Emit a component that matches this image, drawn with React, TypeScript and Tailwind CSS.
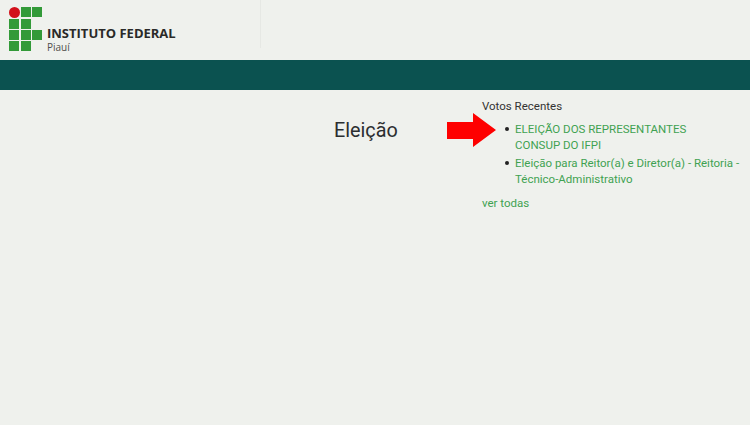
import React from "react";

function Logo() {
  const squares = [
    [21, 7], [32, 7],
    [9, 19], [21, 19],
    [9, 30], [21, 30], [32, 30],
    [9, 41], [21, 41],
  ];
  return (
    <svg width="44" height="54" viewBox="0 0 44 54" className="block">
      <circle cx="14.5" cy="12.5" r="5.5" fill="#d2111b" />
      {squares.map(([x, y]) => (
        <rect key={`${x}-${y}`} x={x} y={y} width="10" height="10" fill="#329a38" />
      ))}
    </svg>
  );
}

export default function App() {
  return (
    <div className="relative min-h-[425px] w-[750px] overflow-hidden bg-[#eff1ed] font-['Roboto',sans-serif]">
      <header className="flex h-[60px] items-start">
        <div className="flex h-[48px] w-[261px] border-r border-[#e6e8e4]">
          <Logo />
          <div className="ml-[3px] mt-[26px] flex flex-col gap-[2px] font-['Open_Sans',sans-serif] text-[#2a2a28]">
            <div className="text-[13px] font-bold leading-[14px]">INSTITUTO FEDERAL</div>
            <div className="text-[10px] leading-[11px] text-[#4f4f4b]">Piauí</div>
          </div>
        </div>
      </header>
      <div className="h-[30px] bg-[#0b5250]" />
      <main className="flex">
        <div className="w-[482px] shrink-0 pt-[29px] pl-[334px]">
          <h1 className="text-[19.8px] leading-[24px] text-[#2b2e30]">Eleição</h1>
        </div>
        <div className="pt-[8px] text-[11.5px] leading-[16.6px]">
          <p className="text-[#333333]">Votos Recentes</p>
          <ul className="mt-[6px] ml-[33px] text-[#3fa251]">
            <li className="relative w-[200px] before:absolute before:left-[-10px] before:top-[6.5px] before:size-[3.5px] before:rounded-full before:bg-[#222222]">
              ELEIÇÃO DOS REPRESENTANTES CONSUP DO IFPI
            </li>
            <li className="relative mt-[1px] w-[235px] before:absolute before:left-[-10px] before:top-[6.5px] before:size-[3.5px] before:rounded-full before:bg-[#222222]">
              Eleição para Reitor(a) e Diretor(a) - Reitoria - Técnico-Administrativo
            </li>
          </ul>
          <p className="mt-[7px] text-[#3fa251]">ver todas</p>
        </div>
      </main>
      <svg width="50" height="36" viewBox="0 0 50 36" className="absolute left-[447px] top-[113px]">
        <polygon points="0,9 26,9 26,0 49,17 26,34 26,26 0,26" fill="#fe0000" />
      </svg>
    </div>
  );
}
